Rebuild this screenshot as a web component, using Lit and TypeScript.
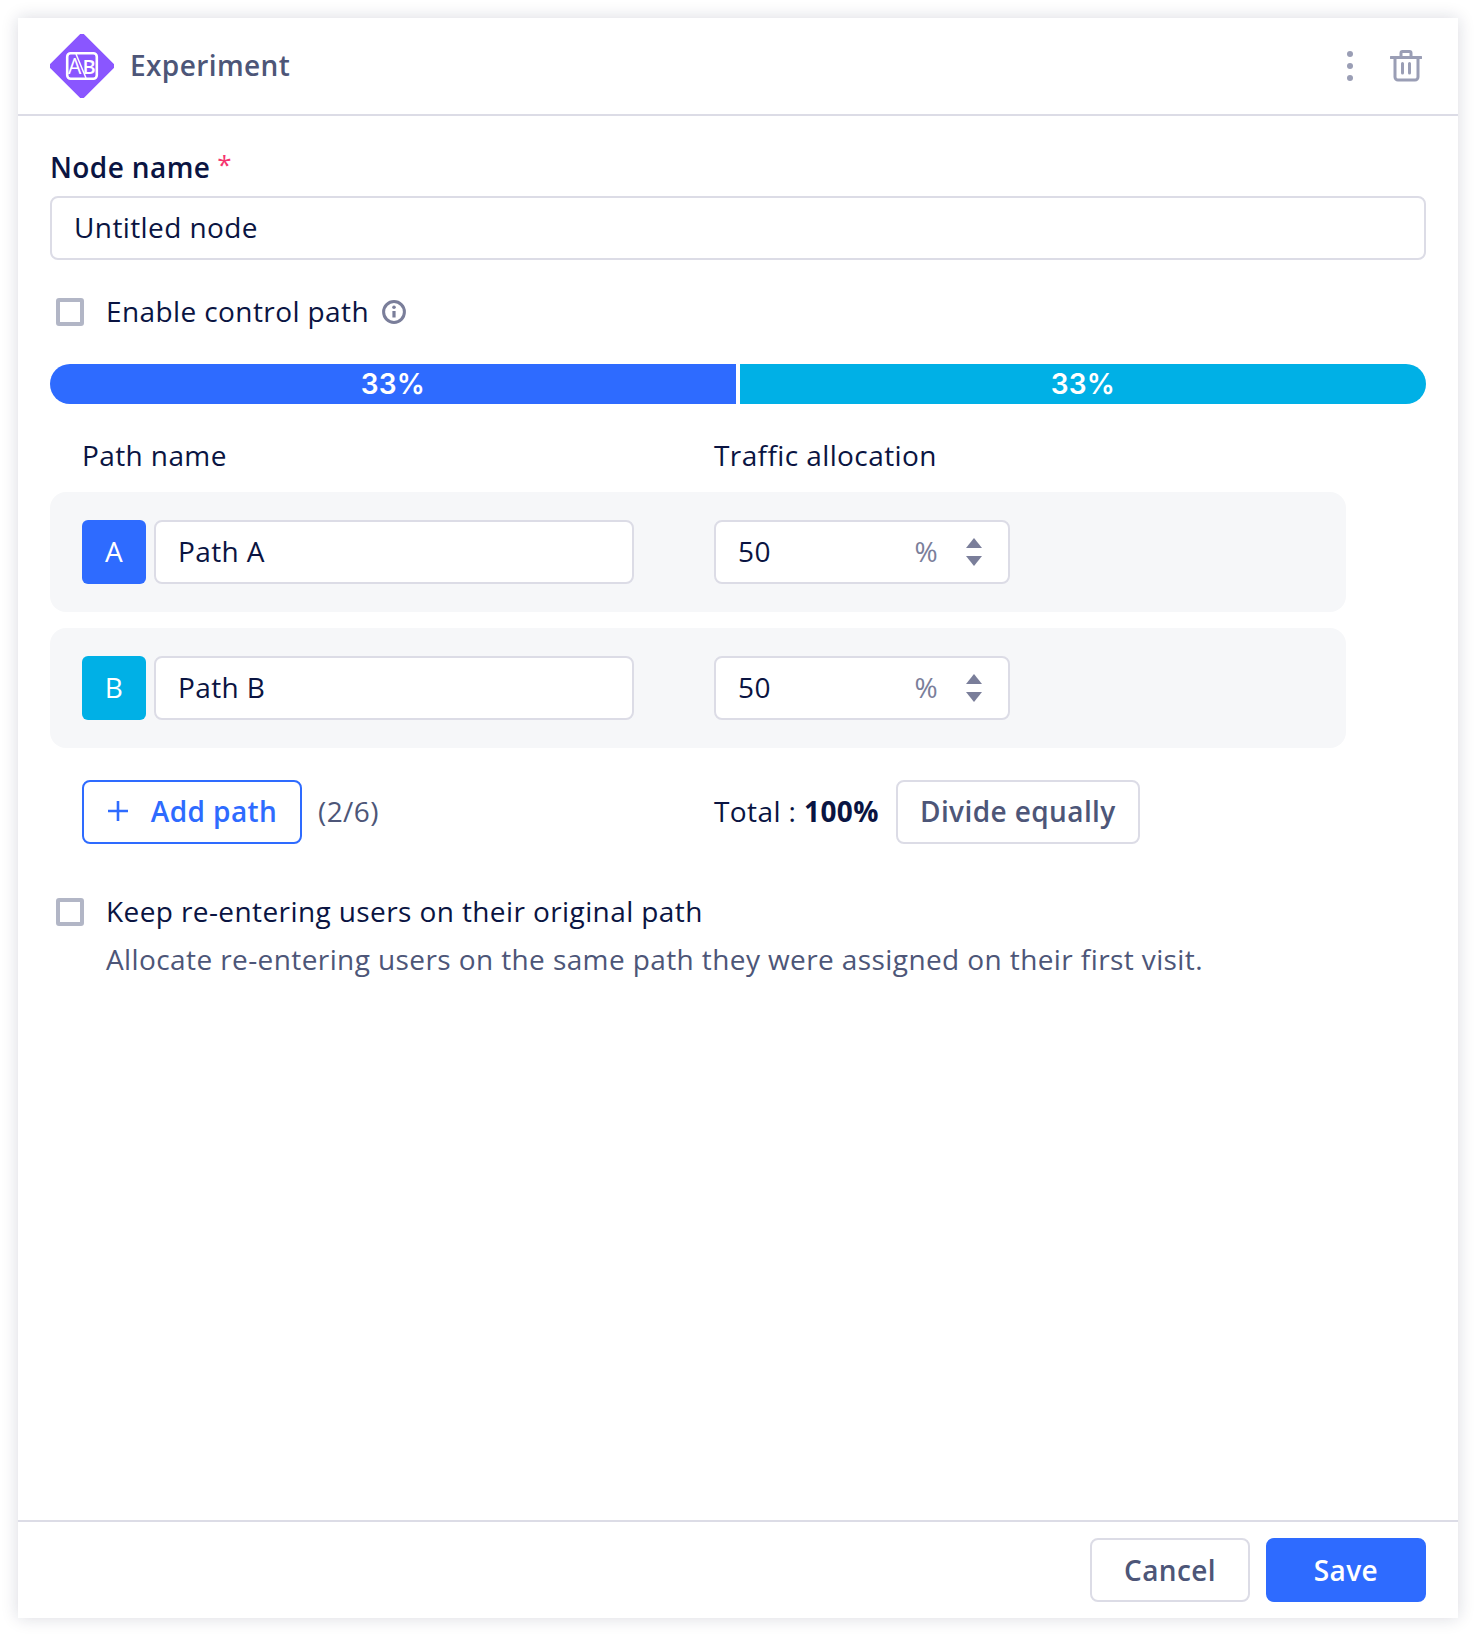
import { LitElement, html, css, svg } from "lit";
import { customElement } from "lit/decorators.js";

const spinner = html`<svg class="spin" width="16" height="28" viewBox="0 0 16 28" aria-hidden="true">
  <path d="M8 0 L16 10 H0 Z" fill="#7a7e9a"/><path d="M0 18 H16 L8 28 Z" fill="#7a7e9a"/></svg>`;

@customElement("app-root")
export class AppRoot extends LitElement {
  static styles = css`
    :host { display: block; padding: 18px 22px 22px 18px; font-family: "Open Sans", "Liberation Sans", sans-serif; font-size: 28px; line-height: 40px; letter-spacing: 0.4px; color: #0a1442; background: #fff; }
    * { box-sizing: border-box; }
    .card { width: 1440px; height: 1600px; background: #fff; display: flex; flex-direction: column; box-shadow: 0 0 16px rgba(20, 24, 60, 0.16); }
    .head { height: 98px; flex: none; border-bottom: 2px solid #dcdce6; display: flex; align-items: center; padding: 0 32px; }
    .logo { display: block; margin-right: 16px; }
    .title { font-weight: 600; color: #4d5678; padding-bottom: 2px; }
    .spacer { flex: 1; }
    .dots { display: flex; flex-direction: column; gap: 6px; margin-right: 37px; }
    .dots i { width: 6px; height: 6px; border-radius: 50%; background: #9a9eb5; display: block; }
    .trash { margin-right: 4px; display: block; }
    .body { flex: 1; padding: 31px 32px 0; display: flex; flex-direction: column; }
    .lab { font-weight: 600; height: 40px; display: flex; margin-bottom: 9px; }
    .star { color: #f5356f; margin-left: 7px; font-weight: 400; font-size: 26px; line-height: 34px; }
    input { font: inherit; letter-spacing: inherit; color: inherit; border: 2px solid #dcdce6; border-radius: 8px; height: 64px; padding: 0 22px 2px; background: #fff; outline: none; width: 100%; display: block; }
    .check { display: flex; align-items: center; height: 40px; padding-left: 6px; }
    .box { width: 28px; height: 28px; border: 4px solid #b2b6c6; border-radius: 3px; margin-right: 22px; flex: none; background: #fff; }
    .txt { margin-top: -2px; }
    .enable { margin-top: 32px; }
    .info { margin-left: 13px; display: block; }
    .bar { margin-top: 32px; height: 40px; display: flex; gap: 4px; border-radius: 20px; overflow: hidden; font-family: Inter, "Liberation Sans", sans-serif; font-weight: 600; font-size: 28px; color: #fff; letter-spacing: 0.2px; }
    .bar div { flex: 1; display: flex; align-items: center; justify-content: center; }
    .blue { background: #2e6bff; }
    .cyan { background: #00b0e6; }
    .cols { display: grid; grid-template-columns: 632px 1fr; margin-top: 31px; margin-bottom: 1px; padding-left: 32px; height: 40px; }
    .rows { display: flex; flex-direction: column; gap: 16px; margin-top: 16px; }
    .row { width: 1296px; height: 120px; background: #f6f7f9; border-radius: 16px; padding: 28px 32px; display: flex; }
    .badge { width: 64px; height: 64px; border-radius: 6px; color: #fff; display: flex; align-items: center; justify-content: center; font-size: 28px; font-weight: 500; padding-bottom: 2px; flex: none; }
    .name { width: 480px; margin-left: 8px; flex: none; }
    .traffic { width: 296px; margin-left: 80px; height: 64px; flex: none; }
    .num { height: 64px; border: 2px solid #dcdce6; border-radius: 8px; background: #fff; display: flex; align-items: center; padding: 0 26px 0 22px; }
    .numval { margin-top: -2px; }
    .pct { margin-left: auto; margin-top: -2px; color: #7a7e9a; margin-right: 28px; }
    .spin { display: block; }
    .actions { margin-top: 32px; padding-left: 32px; height: 64px; display: flex; align-items: center; }
    .btn { height: 64px; border-radius: 8px; border: 2px solid #dcdce6; background: #fff; font: inherit; letter-spacing: inherit; font-weight: 600; color: #4d5678; display: flex; align-items: center; justify-content: center; padding: 0 0 2px; white-space: nowrap; }
    .add { width: 220px; border-color: #2e6bff; color: #2e6bff; flex: none; padding-left: 1px; }
    .add svg { margin-right: 23px; display: block; }
    .count { margin-left: 16px; margin-top: -2px; color: #4d5678; width: 396px; flex: none; }
    .total { margin-top: -2px; }
    .total b { font-weight: 700; }
    .divide { margin-left: 17px; width: 244px; }
    .keep { margin-top: 48px; }
    .desc { margin: 7px 0 0 56px; color: #4d5678; }
    .foot { height: 98px; flex: none; border-top: 2px solid #dcdce6; display: flex; justify-content: flex-end; align-items: center; padding: 0 32px; gap: 16px; }
    .foot .btn { width: 160px; padding: 0 0 1px; }
    .save { background: #2e6bff; border-color: #2e6bff; color: #fff; }
  `;

  render() {
    return html`<div class="card">
      <div class="head">
        <svg class="logo" width="64" height="64" viewBox="0 0 64 64" aria-hidden="true">
          <rect x="8" y="8" width="48" height="48" rx="4" transform="rotate(45 32 32)" fill="#8a56ff"/>
          <rect x="17.2" y="19.2" width="29.6" height="25.6" rx="3.5" fill="none" stroke="#fff" stroke-width="2.6"/>
          ${svg`<text x="18" y="39.5" font-family="Open Sans" font-size="21" font-weight="500" letter-spacing="0" fill="#fff">A</text>
          <text x="32.5" y="39.5" font-family="Open Sans" font-size="20" font-weight="600" letter-spacing="0" fill="#fff">B</text>`}
          <line x1="26" y1="20" x2="36" y2="44" stroke="#fff" stroke-width="1.5"/>
        </svg>
        <span class="title">Experiment</span>
        <span class="spacer"></span>
        <div class="dots"><i></i><i></i><i></i></div>
        <svg class="trash" width="32" height="32" viewBox="0 0 32 32" fill="none" stroke="#9a9eb5" stroke-width="3" stroke-linecap="round" stroke-linejoin="round" aria-hidden="true">
          <path d="M1 7.5H31M5 7.5V27a3 3 0 0 0 3 3H25a3 3 0 0 0 3-3V7.5M11 7V3a1.5 1.5 0 0 1 1.5-1.5h7A1.5 1.5 0 0 1 21 3V7M12.5 13.5V23M19.5 13.5V23"/>
        </svg>
      </div>
      <div class="body">
        <div class="lab">Node name<span class="star">*</span></div>
        <input value="Untitled node" />
        <div class="check enable">
          <span class="box"></span><span class="txt">Enable control path</span>
          <svg class="info" width="24" height="24" viewBox="0 0 24 24" fill="none" stroke="#7a7e9a" aria-hidden="true">
            <circle cx="12" cy="12" r="10.4" stroke-width="3"/>
            <path d="M12 11v6.5" stroke-width="3.2"/><circle cx="12" cy="7.2" r="1.8" fill="#7a7e9a" stroke="none"/>
          </svg>
        </div>
        <div class="bar"><div class="blue">33%</div><div class="cyan">33%</div></div>
        <div class="cols"><span>Path name</span><span>Traffic allocation</span></div>
        <div class="rows">
          <div class="row">
            <div class="badge blue">A</div>
            <input class="name" value="Path A" />
            <div class="traffic"><div class="num"><span class="numval">50</span><span class="pct">%</span>${spinner}</div></div>
          </div>
          <div class="row">
            <div class="badge cyan">B</div>
            <input class="name" value="Path B" />
            <div class="traffic"><div class="num"><span class="numval">50</span><span class="pct">%</span>${spinner}</div></div>
          </div>
        </div>
        <div class="actions">
          <button class="btn add">
            <svg width="20" height="20" viewBox="0 0 20 20" stroke="#2e6bff" stroke-width="2.6" aria-hidden="true"><path d="M10 0V20M0 10H20"/></svg>
            Add path
          </button>
          <span class="count">(2/6)</span>
          <span class="total">Total : <b>100%</b></span>
          <button class="btn divide">Divide equally</button>
        </div>
        <div class="check keep"><span class="box"></span><span class="txt">Keep re-entering users on their original path</span></div>
        <div class="desc">Allocate re-entering users on the same path they were assigned on their first visit.</div>
      </div>
      <div class="foot">
        <button class="btn">Cancel</button>
        <button class="btn save">Save</button>
      </div>
    </div>`;
  }
}
